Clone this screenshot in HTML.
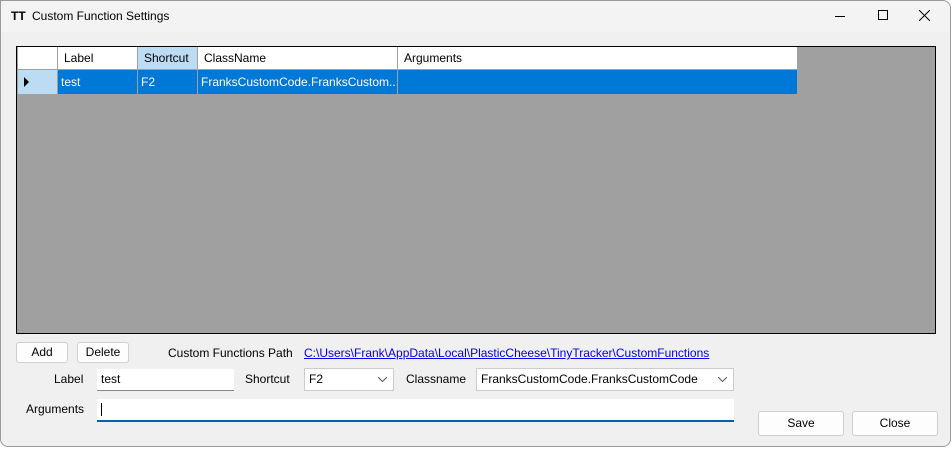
<!DOCTYPE html>
<html><head><style>
*{margin:0;padding:0;box-sizing:border-box}
body{width:952px;height:449px;background:#fff;font-family:"Liberation Sans",sans-serif;font-size:12px;color:#000;position:relative;overflow:hidden}
.win{position:absolute;left:0;top:0;width:951px;height:447px;background:#f0f0f0;border:1px solid #9a9a9a;border-radius:0 8px 8px 8px}
.tb{position:absolute;left:0;top:0;width:100%;height:31px;background:#f3f3f3;border-radius:0 8px 0 0}
.a{position:absolute;white-space:nowrap}
.grid{position:absolute;left:15px;top:45px;width:920px;height:288px;background:#a0a0a0;border:1px solid #000}
.c{position:absolute;height:23px;line-height:22px;padding-left:6px;border-right:1px solid #a0a0a0;overflow:hidden}
.btn{position:absolute;background:#fdfdfd;border:1px solid #d0d0d0;border-radius:3px;text-align:center}
.inp{position:absolute;background:#fff;padding-left:4px}
.chev{position:absolute;right:6px;top:8px}
</style></head><body>
<div class="win">
<div class="tb"></div>
<div class="a" style="left:10px;top:8px;font-weight:bold;font-size:12px">TT</div>
<div class="a" style="left:31px;top:8px">Custom Function Settings</div>
<div class="a" style="left:834px;top:15px;width:10px;height:1px;background:#000"></div>
<div class="a" style="left:877px;top:9px;width:10px;height:10px;border:1px solid #000"></div>
<svg class="a" style="left:918px;top:9px" width="11" height="11"><path d="M0 0L11 11M11 0L0 11" stroke="#000" stroke-width="1"/></svg>

<div class="grid">
 <div class="c" style="left:1px;top:0;width:40px;background:#fff;border-bottom:1px solid #a0a0a0"></div>
 <div class="c" style="left:41px;top:0;width:80px;background:#fff;border-bottom:1px solid #a0a0a0">Label</div>
 <div class="c" style="left:121px;top:0;width:60px;background:#bcdcf4;border-bottom:1px solid #a0a0a0">Shortcut</div>
 <div class="c" style="left:181px;top:0;width:200px;background:#fff;border-bottom:1px solid #a0a0a0">ClassName</div>
 <div class="c" style="left:381px;top:0;width:400px;background:#fff;border-bottom:1px solid #a0a0a0">Arguments</div>
 <div class="c" style="left:1px;top:23px;width:40px;height:24px;background:#bcdcf4"><svg width="6" height="10" style="margin-top:7px"><path d="M0 0L5 5L0 10Z" fill="#000"/></svg></div>
 <div class="c" style="left:41px;top:23px;width:80px;height:24px;line-height:24px;background:#0078d7;color:#fff;padding-left:3px">test</div>
 <div class="c" style="left:121px;top:23px;width:60px;height:24px;line-height:24px;background:#0078d7;color:#fff;padding-left:3px">F2</div>
 <div class="c" style="left:181px;top:23px;width:200px;height:24px;line-height:24px;background:#0078d7;color:#fff;padding-left:3px">FranksCustomCode.FranksCustom...</div>
 <div class="c" style="left:381px;top:23px;width:400px;height:24px;background:#0078d7"></div>
</div>

<div class="btn" style="left:15px;top:341px;width:52px;height:21px;line-height:19px">Add</div>
<div class="btn" style="left:76px;top:341px;width:52px;height:21px;line-height:19px">Delete</div>
<div class="a" style="left:167px;top:345px">Custom Functions Path</div>
<div class="a" style="left:303px;top:345px;color:#0000ee;text-decoration:underline">C:\Users\Frank\AppData\Local\PlasticCheese\TinyTracker\CustomFunctions</div>

<div class="a" style="left:53px;top:371px">Label</div>
<div class="inp" style="left:96px;top:368px;width:137px;height:22px;line-height:21px;border-bottom:1px solid #888">test</div>
<div class="a" style="left:244px;top:371px">Shortcut</div>
<div class="inp" style="left:303px;top:367px;width:90px;height:23px;line-height:20px;border:1px solid #ccc;background:#fff">F2<svg class="chev" width="9" height="5"><path d="M0 0L4.5 4.5L9 0" fill="none" stroke="#555"/></svg></div>
<div class="a" style="left:405px;top:371px">Classname</div>
<div class="inp" style="left:475px;top:367px;width:258px;height:23px;line-height:20px;border:1px solid #ccc">FranksCustomCode.FranksCustomCode<svg class="chev" width="9" height="5"><path d="M0 0L4.5 4.5L9 0" fill="none" stroke="#555"/></svg></div>

<div class="a" style="left:25px;top:401px">Arguments</div>
<div class="inp" style="left:96px;top:398px;width:637px;height:23px;border-bottom:2px solid #005fb8"><div style="position:absolute;left:4px;top:4px;width:1px;height:13px;background:#000"></div></div>

<div class="btn" style="left:757px;top:410px;width:86px;height:25px;line-height:23px">Save</div>
<div class="btn" style="left:851px;top:410px;width:86px;height:25px;line-height:23px">Close</div>
</div>
</body></html>
